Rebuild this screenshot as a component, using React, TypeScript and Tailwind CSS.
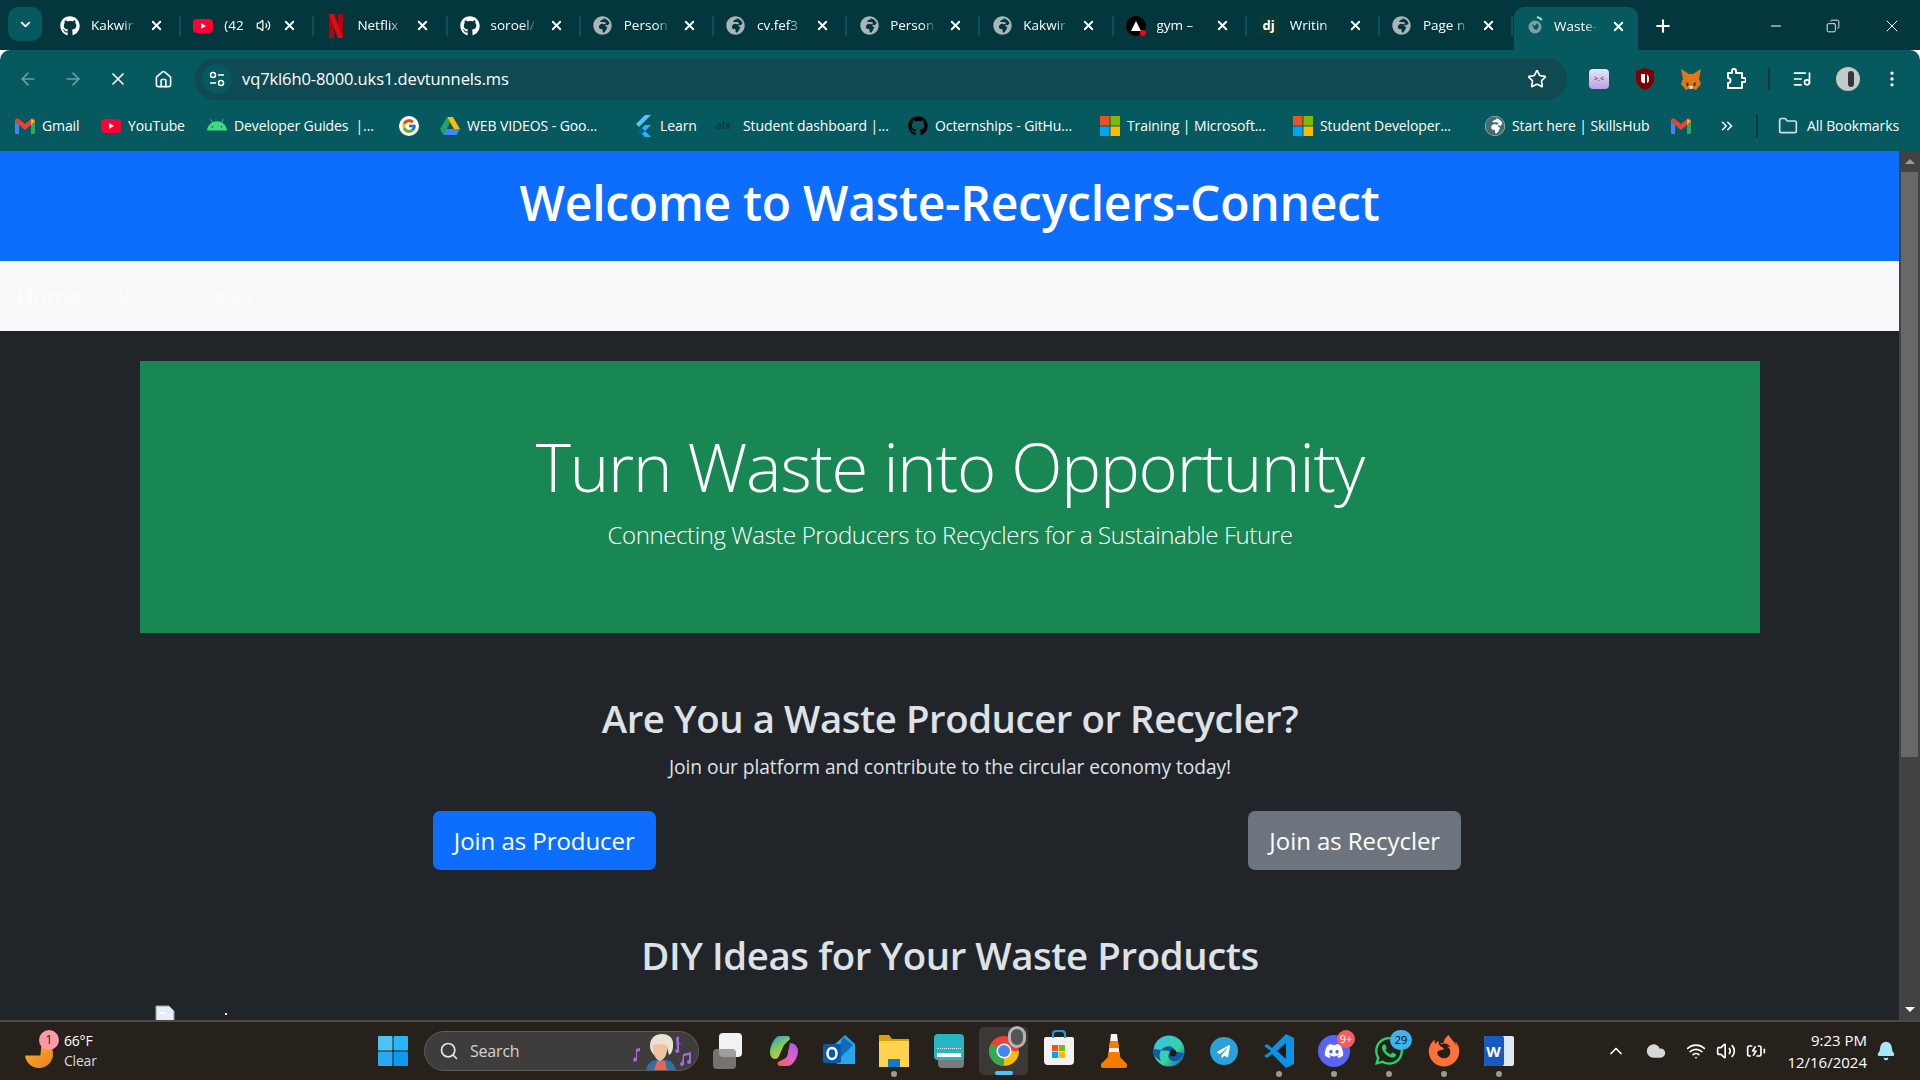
import type { ReactNode } from "react"
import {
  ArrowLeft,
  ArrowRight,
  BatteryCharging,
  Bell,
  ChevronDown,
  ChevronUp,
  ChevronsRight,
  Cloud,
  Copy,
  EllipsisVertical,
  Folder,
  House,
  ListMusic,
  Minus,
  Plus,
  Search,
  Star,
  Volume2,
  Wifi,
  X,
} from "lucide-react"
import {
  FaAndroid,
  FaDiscord,
  FaFirefoxBrowser,
  FaGithub,
  FaGlobeAfrica,
  FaPaperPlane,
  FaWhatsapp,
} from "react-icons/fa"
import { FcGoogle } from "react-icons/fc"

const font = "font-['Open_Sans','Noto_Sans',sans-serif]"

const MsLogo = ({ size = 20 }: { size?: number }) => (
  <svg width={size} height={size} viewBox="0 0 20 20">
    <rect x="0" y="0" width="9.5" height="9.5" fill="#f25022" />
    <rect x="10.5" y="0" width="9.5" height="9.5" fill="#7fba00" />
    <rect x="0" y="10.5" width="9.5" height="9.5" fill="#00a4ef" />
    <rect x="10.5" y="10.5" width="9.5" height="9.5" fill="#ffb900" />
  </svg>
)

const GmailIcon = () => (
  <svg width="20" height="16" viewBox="0 0 20 16">
    <path d="M0 3v11.5A1.5 1.5 0 0 0 1.5 16H4V7z" fill="#4285f4" />
    <path d="M20 3v11.5a1.5 1.5 0 0 1-1.500 1.500H16V7z" fill="#34a853" />
    <path d="M0 3l4 4 6 5 6-5 4-4c0-2.500-2.500-3.500-4-2l-6 5-6-5C2.500-.5 0 .5 0 3z" fill="#ea4335" />
    <path d="M16 1l4 2-4 4z" fill="#fbbc04" />
  </svg>
)

const YoutubeIcon = () => (
  <svg width="20" height="20" viewBox="0 0 20 20">
    <rect x="0" y="3" width="20" height="14" rx="4" fill="#ff0033" />
    <path d="M8 7l5 3-5 3z" fill="#fff" />
  </svg>
)

const NetflixIcon = () => (
  <svg width="16" height="24" viewBox="0 0 16 24">
    <path d="M1 0h5v24l-5 .500z" fill="#b1060f" />
    <path d="M10 0h5v24.500l-5-.500z" fill="#b1060f" />
    <path d="M1 0h5l9 24.500h-5z" fill="#e50914" />
  </svg>
)

const DriveIcon = () => (
  <svg width="20" height="18" viewBox="0 0 20 18">
    <path d="M7 0h6l7 12h-6z" fill="#fbbc04" />
    <path d="M7 0l3 5.500L3.500 18 0 12z" fill="#1fa463" />
    <path d="M6 12h14l-3.500 6h-13z" fill="#4285f4" />
  </svg>
)

const FlutterIcon = () => (
  <svg width="18" height="22" viewBox="0 0 18 22">
    <path d="M11 0h6L5 12l-3-3z" fill="#54c5f8" />
    <path d="M11 10h6l-6 6 6 6h-6l-6-6z" fill="#29b6f6" />
    <path d="M8 13l3 3-3 3-3-3z" fill="#01579b" />
  </svg>
)

const GlobeTab = () => <FaGlobeAfrica size={19} className="text-[#a9b6b8]" />

const GymIcon = () => (
  <span className="relative flex h-5 w-5 items-center justify-center rounded-full bg-black">
    <span className="h-0 w-0 border-x-[5px] border-b-[10px] border-x-transparent border-b-white" />
    <span className="absolute bottom-0 right-0 h-[6px] w-[6px] rounded-full bg-[#f00]" />
  </span>
)

const DjIcon = () => (
  <span className={`flex h-5 w-5 items-center justify-center bg-[#0c3b2e] text-[13px] font-bold text-white ${font}`}>
    dj
  </span>
)

const WasteIcon = () => (
  <svg width="20" height="20" viewBox="0 0 20 20">
    <circle cx="9" cy="11" r="6.500" fill="#7f9ea3" />
    <path d="M6 8l3 2 2-3 2 3-2 4-3-1z" fill="#05595f" />
    <path d="M11 1a9 9 0 0 1 5 3" fill="none" stroke="#8fe3ee" strokeWidth="2" />
  </svg>
)

const tabs: { label: string; icon: ReactNode; audio?: boolean }[] = [
  { label: "Kakwir", icon: <FaGithub size={20} className="text-white" /> },
  { label: "(42", icon: <YoutubeIcon />, audio: true },
  { label: "Netflix", icon: <NetflixIcon /> },
  { label: "soroel/", icon: <FaGithub size={20} className="text-white" /> },
  { label: "Person", icon: <GlobeTab /> },
  { label: "cv.fef3", icon: <GlobeTab /> },
  { label: "Person", icon: <GlobeTab /> },
  { label: "Kakwir", icon: <GlobeTab /> },
  { label: "gym –", icon: <GymIcon /> },
  { label: "Writin", icon: <DjIcon /> },
  { label: "Page n", icon: <GlobeTab /> },
]

const Tab = ({ label, icon, audio }: { label: string; icon: ReactNode; audio?: boolean }) => (
  <div className="relative flex h-[41px] w-[133.2px] shrink-0 items-center pl-[12px]">
    <span className="flex w-[20px] justify-center">{icon}</span>
    <span className="ml-[11px] w-[46px] whitespace-nowrap text-[13.5px] text-white [mask-image:linear-gradient(to_right,black_70%,transparent)]">
      {label}
    </span>
    {audio && <Volume2 size={15} className="-ml-[14px] text-white" />}
    <X size={15} strokeWidth={3} className="absolute left-[101px] text-white" />
    <span className="absolute right-0 h-[20px] w-[2px] bg-[#07535b]" />
  </div>
)

const bookmarks: { label?: string; icon: ReactNode; width: string }[] = [
  { label: "Gmail", icon: <GmailIcon />, width: "w-[86px]" },
  { label: "YouTube", icon: <YoutubeIcon />, width: "w-[106px]" },
  { label: "Developer Guides  |...", icon: <FaAndroid size={20} className="text-[#3ddc84]" />, width: "w-[192px]" },
  { icon: <span className="flex h-5 w-5 items-center justify-center rounded-full bg-white"><FcGoogle size={16} /></span>, width: "w-[41px]" },
  { label: "WEB VIDEOS - Goo...", icon: <DriveIcon />, width: "w-[193px]" },
  { label: "Learn", icon: <FlutterIcon />, width: "w-[83px]" },
  { label: "Student dashboard |...", icon: <span className="w-5 text-[10px] font-bold text-[#143c3f]">alx</span>, width: "w-[192px]" },
  { label: "Octernships - GitHu...", icon: <FaGithub size={20} className="text-black" />, width: "w-[192px]" },
  { label: "Training | Microsoft...", icon: <MsLogo />, width: "w-[193px]" },
  { label: "Student Developer...", icon: <MsLogo />, width: "w-[192px]" },
  { label: "Start here | SkillsHub", icon: <FaGlobeAfrica size={20} className="rounded-full bg-white text-[#486c70]" />, width: "w-[186px]" },
  { icon: <GmailIcon />, width: "w-[38px]" },
]

const SiteInfoIcon = () => (
  <svg width="16" height="16" viewBox="0 0 16 16" fill="none" stroke="currentColor" strokeWidth="1.5">
    <circle cx="4" cy="4" r="2.500" />
    <path d="M9 4h6M1 12h6" />
    <circle cx="12" cy="12" r="2.500" />
  </svg>
)

const ExtensionIcon = () => (
  <svg width="20" height="22" viewBox="0 0 20 22" fill="none" stroke="currentColor" strokeWidth="2" strokeLinejoin="round">
    <path d="M2 5h4V3a2 2 0 0 1 4 0v2h6v5h2a2 2 0 0 1 0 4h-2v6H2v-5a2.500 2.500 0 0 0 0-5z" />
  </svg>
)

const BrowserChrome = () => (
  <div className={`shrink-0 text-white ${font}`}>
    <div className="flex h-[50px] items-end bg-[#03363d]">
      <div className="mb-[9px] ml-[8px] flex h-[34px] w-[34px] shrink-0 items-center justify-center rounded-[10px] bg-[#05595f]">
        <ChevronDown size={15} strokeWidth={3} />
      </div>
      <div className="ml-[6px] flex pb-[4px]">
        {tabs.map((t, i) => (
          <Tab key={i} label={t.label} icon={t.icon} audio={t.audio} />
        ))}
      </div>
      <div className="relative ml-[1px] flex h-[43px] w-[124px] shrink-0 items-center rounded-t-[10px] bg-[#05595f] pb-[5px] pl-[12px]">
        <WasteIcon />
        <span className="ml-[8px] w-[44px] whitespace-nowrap text-[13.5px] [mask-image:linear-gradient(to_right,black_70%,transparent)]">
          Waste-
        </span>
        <X size={15} strokeWidth={3} className="absolute left-[97px]" />
      </div>
      <div className="mb-[4px] ml-[15px] flex h-[41px] items-center">
        <Plus size={20} strokeWidth={2.5} />
      </div>
      <div className="mb-[4px] ml-auto flex h-[41px] items-center gap-[42px] pr-[18px]">
        <Minus size={16} strokeWidth={1.5} />
        <Copy size={14} strokeWidth={1.5} className="scale-x-[-1]" />
        <X size={20} strokeWidth={1.2} />
      </div>
    </div>

    <div className="flex h-[50px] items-center rounded-t-[10px] bg-[#05595f] pt-[8px]">
      <div className="flex w-[195px] shrink-0 items-center pl-[18px]">
        <ArrowLeft size={20} className="text-[#6f9ea2]" />
        <ArrowRight size={20} className="ml-[25px] text-[#6f9ea2]" />
        <X size={20} className="ml-[25px]" />
        <House size={19} className="ml-[26px]" />
      </div>
      <div className="flex h-[42px] w-[1372px] shrink-0 items-center rounded-full bg-[#0f4a52] pl-[7px] pr-[20px]">
        <span className="flex h-[30px] w-[30px] items-center justify-center rounded-full bg-[#05595f]">
          <SiteInfoIcon />
        </span>
        <span className="ml-[10px] text-[16.5px] tracking-[-0.1px]">vq7kl6h0-8000.uks1.devtunnels.ms</span>
        <Star size={20} className="ml-auto" />
      </div>
      <div className="flex flex-1 items-center pl-[22px]">
        <span className="flex h-[20px] w-[20px] shrink-0 items-center justify-center rounded-[4px] bg-gradient-to-b from-[#e8e6f8] to-[#b9a0e8] text-[7px] text-[#222]">
          &gt;.&lt;
        </span>
        <svg width="20" height="22" viewBox="0 0 20 22" className="ml-[26px] shrink-0">
          <path d="M10 0l9 3v8c0 6-4 9-9 11-5-2-9-5-9-11V3z" fill="#800000" />
          <path d="M6 6v6a3 3 0 0 0 4 3V6zM12 6v9a3 3 0 0 0 2-3V9z" fill="#fff" />
        </svg>
        <svg width="22" height="21" viewBox="0 0 22 21" className="ml-[25px] shrink-0">
          <path d="M1 0l8 5h4l8-5-2 10 2 5-5 6-5-2-5 2-5-6 2-5z" fill="#e2761b" />
          <path d="M6 13l3 2-2 3zM16 13l-3 2 2 3z" fill="#233447" />
          <path d="M9 17h4l-1 3h-2z" fill="#f5e1c9" />
        </svg>
        <span className="ml-[24px] shrink-0">
          <ExtensionIcon />
        </span>
        <span className="ml-[22px] h-[22px] w-[2px] shrink-0 bg-[#03363d]" />
        <ListMusic size={20} className="ml-[22px] shrink-0" />
        <span className="ml-[24px] flex h-[24px] w-[24px] shrink-0 items-center justify-center rounded-full bg-[#c5cbc6]">
          <span className="ml-[6px] h-[16px] w-[6px] rounded-sm bg-[#33363a]" />
        </span>
        <EllipsisVertical size={20} className="ml-[22px] shrink-0" />
      </div>
    </div>

    <div className="flex h-[51px] items-center bg-[#05595f] pl-[15px] text-[14px] tracking-[-0.1px]">
      {bookmarks.map((b, i) => (
        <div key={i} className={`flex shrink-0 items-center gap-[7px] whitespace-pre ${b.width}`}>
          <span className="flex w-[20px] justify-center">{b.icon}</span>
          {b.label && <span>{b.label}</span>}
        </div>
      ))}
      <ChevronsRight size={18} className="ml-[9px]" />
      <span className="ml-[20px] h-[22px] w-[2px] bg-[#03363d]" />
      <Folder size={20} className="ml-[20px] text-[#d5dfe0]" />
      <span className="ml-[9px] whitespace-nowrap">All Bookmarks</span>
    </div>
  </div>
)

const Scrollbar = () => (
  <div className="flex w-[21px] shrink-0 flex-col items-center bg-[#424242]">
    <div className="flex h-[21px] items-center">
      <span className="h-0 w-0 border-x-[5px] border-b-[5px] border-x-transparent border-b-[#9a9a9a]" />
    </div>
    <div className="h-[585px] w-[17px] bg-[#686868]" />
    <div className="mt-auto flex h-[21px] items-center">
      <span className="h-0 w-0 border-x-[5px] border-t-[5px] border-x-transparent border-t-white" />
    </div>
  </div>
)

const Page = () => (
  <div className={`flex min-h-0 flex-1 overflow-hidden bg-[#212529] text-[#dee2e6] ${font}`}>
    <main className="min-w-0 flex-1">
      <header className="flex h-[110px] items-center justify-center bg-[#0d6efd] pb-[6px]">
        <h1 className="text-[48px] font-semibold tracking-[-0.25px] text-white">
          Welcome to Waste-Recyclers-Connect
        </h1>
      </header>
      <nav className="flex h-[70px] items-center bg-[#f8f9fa] pl-[16px] text-[#fdfdfe]">
        <a className="text-[24px] tracking-[-0.6px]">Home</a>
        <a className="ml-[31px] text-[19px] tracking-[-0.4px]">About</a>
        <a className="ml-[22px] text-[19px] tracking-[-0.2px]">Contact</a>
      </nav>
      <div className="pl-[140px] pr-[139px] pt-[30px]">
        <section className="flex h-[272px] flex-col items-center bg-[#198754] pt-[65px] text-white">
          <h2 className="text-[67px] font-light leading-[80px] tracking-[-1.2px]">Turn Waste into Opportunity</h2>
          <p className="mt-[11px] text-[24px] font-light tracking-[-0.4px]">
            Connecting Waste Producers to Recyclers for a Sustainable Future
          </p>
        </section>
        <section className="pt-[62px] text-center">
          <h2 className="text-[38.4px] font-semibold leading-[46px] tracking-[-0.45px]">
            Are You a Waste Producer or Recycler?
          </h2>
          <p className="mt-[11px] text-[19.2px] leading-[29px] tracking-[-0.06px]">
            Join our platform and contribute to the circular economy today!
          </p>
          <div className="-ml-[1px] mt-[30px] grid grid-cols-2 justify-items-center">
            <a className="flex h-[59px] w-[223px] items-center justify-center rounded-[7px] bg-[#0d6efd] text-[24px] tracking-[-0.05px] text-white">
              Join as Producer
            </a>
            <a className="flex h-[59px] w-[213px] items-center justify-center rounded-[7px] bg-[#6c757d] text-[24px] tracking-[-0.05px] text-white">
              Join as Recycler
            </a>
          </div>
          <h2 className="mt-[62px] text-[38.4px] font-semibold leading-[46px] tracking-[-0.42px]">
            DIY Ideas for Your Waste Products
          </h2>
        </section>
        <div className="mt-[27px] flex items-start pl-[15px]">
          <svg width="20" height="20" viewBox="0 0 20 20">
            <path d="M1 1h13l5 5v13H1z" fill="#e8ecf5" stroke="#9aa0a8" />
            <path d="M3 9l4-3 5 3z" fill="#ffffff" />
          </svg>
          <span className="ml-[50px] mt-[8px] h-[2px] w-[2px] bg-white" />
        </div>
      </div>
    </main>
    <Scrollbar />
  </div>
)

const WindowsLogo = () => (
  <svg width="30" height="30" viewBox="0 0 30 30">
    <rect x="0" y="0" width="14.500" height="14.500" rx="1" fill="#4fc3f7" />
    <rect x="15.500" y="0" width="14.500" height="14.500" rx="1" fill="#29b6f6" />
    <rect x="0" y="15.500" width="14.500" height="14.500" rx="1" fill="#29a9f0" />
    <rect x="15.500" y="15.500" width="14.500" height="14.500" rx="1" fill="#0f9af0" />
  </svg>
)

const SearchMascot = () => (
  <svg width="64" height="38" viewBox="0 0 64 38">
    <path d="M2 26l2-1v-8l4-1v3l-3 1v7a2 2 0 1 1-3-1z" fill="#a06be0" />
    <path d="M44 6l3-2v7l3 2-3-1v6a2 2 0 1 1-2-1z" fill="#a06be0" />
    <path d="M51 22l8-2v10a2 2 0 1 1-2-2v-5l-5 1v8a2 2 0 1 1-2-2z" fill="#a06be0" />
    <path d="M14 38c1-6 5-9 10-10l10 0c6 1 9 5 10 10z" fill="#2f6fa8" />
    <path d="M22 38l3-9h8l2 9z" fill="#e8654c" />
    <path d="M18 14c0-8 5-12 12-12s12 4 11 12c0 5-2 8-4 9l-2-8-12-1-1 9c-2-2-4-5-4-9z" fill="#e9e3cf" />
    <path d="M21 13c3-1 10-1 14 0 1 6-1 14-7 16-5-1-8-9-7-16z" fill="#eec3a0" />
  </svg>
)

const taskIcons: { icon: ReactNode; dot?: boolean; active?: boolean; badge?: string }[] = [
  {
    icon: (
      <span className="relative -ml-[6px] block h-[36px] w-[32px]">
        <span className="absolute right-0 top-0 h-[24px] w-[23px] rounded-sm bg-[#f2f2f2]" />
        <span className="absolute bottom-0 left-[3px] h-[20px] w-[23px] rounded-sm bg-[#8a8a8a]/80" />
      </span>
    ),
  },
  {
    icon: (
      <svg width="30" height="32" viewBox="0 0 30 32">
        <defs>
          <linearGradient id="cp" x1="0" y1="0" x2="0.6" y2="1">
            <stop offset="0" stopColor="#1f8fe8" />
            <stop offset="0.55" stopColor="#7fcf5a" />
            <stop offset="1" stopColor="#f4b63e" />
          </linearGradient>
          <linearGradient id="cp2" x1="0.8" y1="0" x2="0.2" y2="1">
            <stop offset="0" stopColor="#a55fe8" />
            <stop offset="0.6" stopColor="#e85fc0" />
            <stop offset="1" stopColor="#f2605a" />
          </linearGradient>
        </defs>
        <path d="M10 1h8c2 0 3 1 3 3l-6 6-5 11c-1 2-2 3-4 3-3 0-5-3-5-7C1 11 6 1 10 1z" fill="url(#cp)" />
        <path d="M21 8c5 0 8 4 8 8 0 6-5 15-10 15h-7c-3 0-4-2-3-4l6-3c3-1 4-4 4-7z" fill="url(#cp2)" />
      </svg>
    ),
  },
  {
    icon: (
      <svg width="32" height="32" viewBox="0 0 32 32">
        <path d="M12 9l10-9 10 9v20H14z" fill="#2ba4e8" />
        <path d="M20 2l10 8-14 14-3-3z" fill="#0f6cbd" />
        <rect x="0" y="9" width="18" height="19" rx="2" fill="#0a5aa8" />
        <ellipse cx="9" cy="18.500" rx="4.500" ry="5.500" fill="none" stroke="#fff" strokeWidth="2.500" />
      </svg>
    ),
  },
  {
    dot: true,
    icon: (
      <svg width="30" height="32" viewBox="0 0 30 32">
        <path d="M0 0h10l3 4h17v28H0z" fill="#d9a400" />
        <rect x="0" y="6" width="30" height="26" fill="#ffd34d" />
        <rect x="9" y="24" width="12" height="8" rx="1" fill="#0f7ac6" />
      </svg>
    ),
  },
  {
    icon: (
      <span className="relative block h-[34px] w-[30px]">
        <span className="absolute bottom-0 left-[4px] h-[16px] w-[26px] rounded-sm bg-[#7a7a7a]" />
        <span className="absolute top-0 flex h-[26px] w-full flex-col justify-end rounded-sm bg-[#27b5c4] p-[3px]">
          <span className="mb-[2px] h-[3px] w-full border-t border-dotted border-white" />
          <span className="h-[4px] w-full bg-white" />
        </span>
      </span>
    ),
  },
  {
    active: true,
    icon: (
      <span className="relative block h-[32px] w-[32px]">
        <svg width="32" height="32" viewBox="0 0 32 32">
          <circle cx="16" cy="16" r="15" fill="#ea4335" />
          <path d="M16 16L3 23.500A15 15 0 0 1 3 8.500z" fill="#34a853" />
          <path d="M16 31A15 15 0 0 1 3 23.500L9 15l7 1 7 0z" fill="#34a853" />
          <path d="M16 31A15 15 0 0 0 31 16H16z" fill="#fbbc04" />
          <circle cx="16" cy="16" r="7.500" fill="#fff" />
          <circle cx="16" cy="16" r="6" fill="#4285f4" />
        </svg>
        <span className="absolute -right-[6px] -top-[9px] h-[22px] w-[18px] rounded-full border-[3px] border-[#b5b5b5] bg-[#555]" />
      </span>
    ),
  },
  {
    icon: (
      <span className="relative flex h-[28px] w-[30px] items-center justify-center rounded-b-[4px] rounded-t-[2px] bg-[#f2f2f2]">
        <span className="absolute -top-[7px] h-[8px] w-[14px] rounded-t-[4px] border-2 border-b-0 border-[#19a0e0]" />
        <MsLogo size={13} />
      </span>
    ),
  },
  {
    icon: (
      <svg width="28" height="34" viewBox="0 0 28 34">
        <path d="M11 0h6l3 24h-12z" fill="#f4f4f4" />
        <path d="M10 7h8l1 7H9zM8.500 18h11l1 6h-13z" fill="#f57c00" />
        <path d="M7 24h14l6 6v2a2 2 0 0 1-2 2H3a2 2 0 0 1-2-2v-2z" fill="#f57c00" />
      </svg>
    ),
  },
  {
    icon: (
      <svg width="32" height="32" viewBox="0 0 32 32">
        <defs>
          <linearGradient id="edge" x1="0" y1="0" x2="1" y2="1">
            <stop offset="0" stopColor="#35c1f1" />
            <stop offset="0.6" stopColor="#39d2a0" />
            <stop offset="1" stopColor="#0c59a4" />
          </linearGradient>
        </defs>
        <circle cx="16" cy="16" r="15.500" fill="url(#edge)" />
        <path d="M31 18c-1 6-7 9-11 8-5-1-6-6-3-8 2-2 5-1 6 0-1-5-6-8-11-6-5 2-7 8-4 14C2 23 0 19 .5 14" fill="#0c59a4" />
        <circle cx="20" cy="18" r="3.500" fill="#1d1a17" />
      </svg>
    ),
  },
  {
    icon: (
      <span className="flex h-[28px] w-[28px] items-center justify-center rounded-full bg-[#2aa1d9]">
        <FaPaperPlane size={13} className="text-white" />
      </span>
    ),
  },
  {
    dot: true,
    icon: (
      <svg width="30" height="34" viewBox="0 0 30 34">
        <path d="M22 0l8 4v26l-8 4L8 20l-5 4-3-2 7-5-7-5 3-2 5 4z" fill="#0e90e3" />
        <path d="M22 9L13 17l9 8z" fill="#1d1a17" />
      </svg>
    ),
  },
  {
    dot: true,
    badge: "9+",
    icon: (
      <span className="flex h-[32px] w-[32px] items-center justify-center rounded-full bg-[#5865f2]">
        <FaDiscord size={20} className="text-white" />
      </span>
    ),
  },
  {
    dot: true,
    badge: "29",
    icon: <FaWhatsapp size={32} className="text-[#25d366]" />,
  },
  {
    dot: true,
    icon: <FaFirefoxBrowser size={32} className="text-[#ff7139]" />,
  },
  {
    dot: true,
    icon: (
      <span className="flex h-[30px] w-[30px] items-center rounded-[2px] bg-[#dfe8f5]">
        <span className={`flex h-[30px] w-[20px] items-center justify-center rounded-[2px] bg-[#185abd] text-[15px] font-bold text-white ${font}`}>
          W
        </span>
      </span>
    ),
  },
]

const Taskbar = () => (
  <div className={`flex h-[60px] shrink-0 items-center border-t-2 border-[#4a4a4a] bg-[#27211c] text-white ${font}`}>
    <div className="flex w-[365px] shrink-0 items-center pl-[25px]">
      <span className="relative block h-[34px] w-[30px]">
        <span className="absolute bottom-0 left-0 h-[28px] w-[28px] rounded-full bg-gradient-to-br from-[#f9b233] to-[#e9801c] [clip-path:polygon(0_55%,55%_55%,60%_0,100%_0,100%_100%,0_100%)]" />
        <span className="absolute -right-[4px] -top-[4px] flex h-[20px] w-[20px] items-center justify-center rounded-full bg-[#fb9aa6] text-[12px] text-[#222]">
          1
        </span>
      </span>
      <div className="ml-[9px] text-[14px] leading-[20px] tracking-[-0.2px]">
        <div>66°F</div>
        <div className="text-[#d9d9d9]">Clear</div>
      </div>
    </div>
    <div className="flex w-[55px] shrink-0 justify-center">
      <WindowsLogo />
    </div>
    <div className="ml-[4px] flex h-[40px] w-[275px] shrink-0 items-center overflow-hidden rounded-full border border-[#5c5c5c] bg-[#3f3d3b] pl-[14px] pr-[2px]">
      <Search size={20} className="text-[#e6e6e6]" />
      <span className="ml-[11px] text-[16px] tracking-[-0.2px] text-[#d4d4d4]">Search</span>
      <span className="ml-auto block">
        <SearchMascot />
      </span>
    </div>
    <div className="ml-[2px] flex">
      {taskIcons.map((t, i) => (
        <div key={i} className="relative flex h-[58px] w-[55px] items-center justify-center">
          {t.active && <span className="absolute inset-x-[3px] inset-y-[5px] rounded-[5px] bg-[#3b3835]" />}
          <span className="relative">{t.icon}</span>
          {t.badge && (
            <span
              className={`absolute top-[8px] flex h-[18px] w-[18px] items-center justify-center rounded-full text-[11px] ${
                t.badge === "9+" ? "left-[31px] bg-[#f0605f] text-white" : "left-[29px] h-[20px] w-[22px] bg-[#3cb4ef] text-black"
              }`}
            >
              {t.badge}
            </span>
          )}
          {t.dot && <span className="absolute bottom-[3px] h-[6px] w-[6px] rounded-full bg-[#9a9a9a]" />}
          {t.active && <span className="absolute bottom-[5px] h-[4px] w-[18px] rounded-full bg-[#4cc2ff]" />}
        </div>
      ))}
    </div>
    <div className="ml-auto flex items-center pr-[24px]">
      <ChevronUp size={20} />
      <Cloud size={20} fill="#d8d8d8" className="ml-[20px] text-[#d8d8d8]" />
      <Wifi size={20} className="ml-[20px]" />
      <Volume2 size={20} className="ml-[10px]" />
      <BatteryCharging size={20} className="ml-[10px]" />
      <div className="ml-[21px] text-right text-[15px] leading-[22px]">
        <div>9:23 PM</div>
        <div>12/16/2024</div>
      </div>
      <Bell size={20} fill="#a8e6ff" className="ml-[9px] text-[#a8e6ff]" />
    </div>
  </div>
)

export default function App() {
  return (
    <div className="flex h-screen w-full flex-col overflow-hidden">
      <BrowserChrome />
      <Page />
      <Taskbar />
    </div>
  )
}
